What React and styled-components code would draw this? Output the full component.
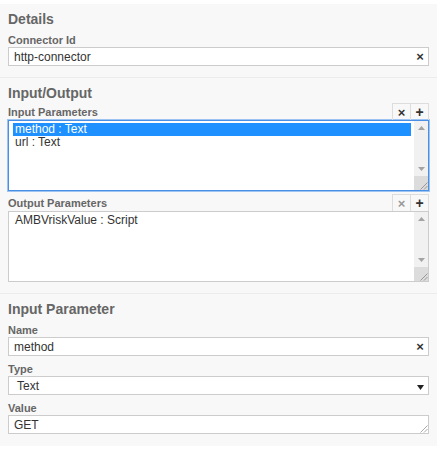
import styled, { createGlobalStyle } from "styled-components";

const GlobalStyle = createGlobalStyle`
  html, body { margin: 0; padding: 0; background: #fff; }
  body { font-family: "Liberation Sans", Arial, sans-serif; }
`;

const Panel = styled.div`
  width: 437px;
  margin-top: 4px;
  background: #f8f8f8;
`;

const Group = styled.div`
  padding: 6px 8px ${(p) => p.$pb}px;
  border-bottom: ${(p) => (p.$last ? "none" : "1px solid #ececec")};
`;

const GroupTitle = styled.div`
  font-size: 14px;
  line-height: 18px;
  font-weight: bold;
  color: #666;
  margin-bottom: ${(p) => p.$mb}px;
`;

const Label = styled.div`
  font-size: 11px;
  line-height: 14px;
  font-weight: bold;
  color: #666;
`;

const Field = styled.div`
  display: flex;
  align-items: center;
  height: 19px;
  box-sizing: border-box;
  border: 1px solid #ccc;
  background: #fff;
  padding: 0 0 0 ${(p) => p.$pl || 5}px;
  margin-bottom: ${(p) => p.$mb || 0}px;
  font-size: 12px;
  color: #333;
  position: relative;
`;

const FieldText = styled.span`
  flex: 1;
`;

const ClearBtn = styled.span`
  width: 16px;
  text-align: center;
  font-size: 13px;
  font-weight: bold;
  color: #333;
  line-height: 17px;
`;

const TableHead = styled.div`
  display: flex;
  align-items: center;
  justify-content: space-between;
  height: 17px;
  margin-top: ${(p) => p.$mt || 0}px;
`;

const Actions = styled.div`
  display: flex;
  align-self: stretch;
  border: 1px solid #ddd;
  border-bottom: none;
  margin-right: 0;
`;

const ActionBtn = styled.div`
  width: 17px;
  display: flex;
  align-items: center;
  justify-content: center;
  font-size: ${(p) => (p.$plus ? 14 : 13)}px;
  font-weight: bold;
  color: ${(p) => (p.$muted ? "#999" : "#333")};
  & + & {
    border-left: 1px solid #ddd;
  }
`;

const ListBox = styled.div`
  display: flex;
  height: 71px;
  box-sizing: border-box;
  background: #fff;
  border: 1px solid ${(p) => (p.$focus ? "#4a8fe6" : "#ccc")};
  box-shadow: ${(p) => (p.$focus ? "0 0 0 1px #9cc3f2" : "none")};
`;

const List = styled.div`
  flex: 1;
  padding: 2px 3px 0 4px;
`;

const Option = styled.div`
  font-size: 12px;
  line-height: 13px;
  padding-left: 2px;
  color: ${(p) => (p.$selected ? "#fff" : "#333")};
  background: ${(p) => (p.$selected ? "#1e90ff" : "transparent")};
`;

const Scrollbar = styled.div`
  width: 14px;
  display: flex;
  flex-direction: column;
  background: #f1f1f1;
`;

const Arrow = styled.div`
  height: 14px;
  display: flex;
  align-items: center;
  justify-content: center;
`;

const Track = styled.div`
  flex: 1;
`;

const Corner = styled.div`
  height: 14px;
  background: #dcdcdc;
  display: flex;
  align-items: flex-end;
  justify-content: flex-end;
`;

const TextArea = styled(Field)`
  padding-right: 0;
  align-items: stretch;
  & > span {
    display: flex;
    align-items: center;
  }
`;

const Grip = ({ color = "#999" }) => (
  <svg width="9" height="9" viewBox="0 0 9 9">
    <path d="M8.5 1.5 L1.5 8.5 M8.5 5 L5 8.5" stroke={color} strokeWidth="1" />
  </svg>
);

const Tri = ({ up }) => (
  <svg width="7" height="4" viewBox="0 0 7 4">
    <path d={up ? "M0 4 L3.5 0 L7 4 Z" : "M0 0 L7 0 L3.5 4 Z"} fill="#a3a3a3" />
  </svg>
);

const Caret = () => (
  <svg width="7" height="5" viewBox="0 0 7 5">
    <path d="M0 0 L7 0 L3.5 5 Z" fill="#222" />
  </svg>
);

const Box = ({ focus, items }) => (
  <ListBox $focus={focus}>
    <List>
      {items.map((it) => (
        <Option key={it.text} $selected={it.selected}>
          {it.text}
        </Option>
      ))}
    </List>
    <Scrollbar>
      <Arrow>
        <Tri up />
      </Arrow>
      <Track />
      <Arrow>
        <Tri />
      </Arrow>
      <Corner>
        <Grip />
      </Corner>
    </Scrollbar>
  </ListBox>
);

export default function App() {
  return (
    <>
      <GlobalStyle />
      <Panel>
        <Group $pb={11}>
          <GroupTitle $mb={5}>Details</GroupTitle>
          <Label>Connector Id</Label>
          <Field>
            <FieldText>http-connector</FieldText>
            <ClearBtn>×</ClearBtn>
          </Field>
        </Group>

        <Group $pb={11}>
          <GroupTitle $mb={1}>Input/Output</GroupTitle>
          <TableHead>
            <Label>Input Parameters</Label>
            <Actions>
              <ActionBtn>×</ActionBtn>
              <ActionBtn $plus>+</ActionBtn>
            </Actions>
          </TableHead>
          <Box
            focus
            items={[
              { text: "method : Text", selected: true },
              { text: "url : Text" },
            ]}
          />
          <TableHead $mt={3}>
            <Label>Output Parameters</Label>
            <Actions>
              <ActionBtn $muted>×</ActionBtn>
              <ActionBtn $plus>+</ActionBtn>
            </Actions>
          </TableHead>
          <Box items={[{ text: "AMBVriskValue : Script" }]} />
        </Group>

        <Group $pb={12} $last>
          <GroupTitle $mb={5}>Input Parameter</GroupTitle>
          <Label>Name</Label>
          <Field $mb={6}>
            <FieldText>method</FieldText>
            <ClearBtn>×</ClearBtn>
          </Field>
          <Label>Type</Label>
          <Field $mb={6} $pl={8}>
            <FieldText>Text</FieldText>
            <ClearBtn>
              <Caret />
            </ClearBtn>
          </Field>
          <Label>Value</Label>
          <TextArea>
            <FieldText>GET</FieldText>
            <Corner as="div" style={{ background: "transparent", alignSelf: "flex-end", width: 12, height: 12 }}>
              <Grip color="#aaa" />
            </Corner>
          </TextArea>
        </Group>
      </Panel>
    </>
  );
}
